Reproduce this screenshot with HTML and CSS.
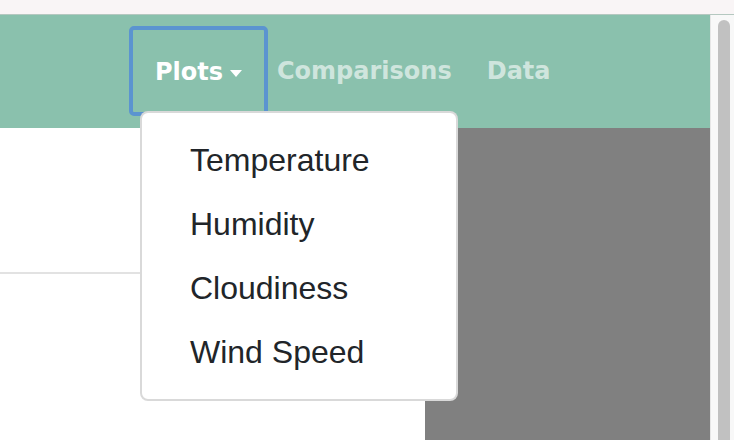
FILE: index.html
```html
<!DOCTYPE html>
<html>
<head>
<meta charset="utf-8">
<link rel="stylesheet" href="styles.css">
</head>
<body>
<div class="topstrip"></div>
<div class="window">
  <div class="page">
    <nav class="navbar">
      <div class="nav-item dropdown">
        <a class="nav-link active focus">Plots<span class="caret"></span></a>
        <div class="dropdown-menu">
          <a class="dropdown-item">Temperature</a>
          <a class="dropdown-item">Humidity</a>
          <a class="dropdown-item">Cloudiness</a>
          <a class="dropdown-item">Wind Speed</a>
        </div>
      </div>
      <a class="nav-link comp">Comparisons</a>
      <a class="nav-link data">Data</a>
    </nav>
    <div class="content">
      <div class="left"><div class="rule"></div></div>
      <div class="right"></div>
    </div>
  </div>
  <div class="scrollbar"><div class="thumb"></div></div>
</div>
</body>
</html>
```
FILE: styles.css
```css
html, body {
  margin: 0;
  padding: 0;
  width: 734px;
  height: 440px;
  overflow: hidden;
}
.topstrip {
  height: 14px;
  background: #f9f5f6;
  border-bottom: 1px solid #b5c8c0;
}
.window {
  display: flex;
  height: 425px;
  overflow: hidden;
}
.page {
  width: 710px;
  display: flex;
  flex-direction: column;
}
.navbar {
  height: 113px;
  background: #8ac1ad;
  display: flex;
  align-items: flex-start;
  padding-left: 129px;
  box-sizing: border-box;
  font-family: "DejaVu Sans", sans-serif;
  font-weight: 700;
  font-size: 24px;
}
.nav-item {
  position: relative;
}
.nav-link {
  display: flex;
  align-items: center;
  color: rgba(255,255,255,0.6);
  text-decoration: none;
  height: 90px;
  box-sizing: border-box;
  margin-top: 11px;
}
.nav-link.active {
  color: #fff;
}
.focus {
  border: 4px solid #5b94d0;
  border-radius: 5px;
  width: 139px;
  padding-left: 22px;
  padding-top: 2px;
}
.caret {
  display: inline-block;
  width: 0;
  height: 0;
  margin-left: 7px;
  border-top: 7px solid #fff;
  border-left: 6px solid transparent;
  border-right: 6px solid transparent;
  margin-top: 2px;
}
.comp {
  margin-left: 9px;
}
.data {
  margin-left: 35px;
}
.dropdown-menu {
  position: absolute;
  top: 96px;
  left: 11px;
  width: 318px;
  box-sizing: border-box;
  background: #fff;
  border: 2px solid rgba(0,0,0,0.15);
  border-radius: 8px;
  padding: 15px 0;
  z-index: 10;
  font-family: "Liberation Sans", Arial, sans-serif;
  font-weight: 400;
  font-size: 32px;
}
.dropdown-item {
  display: block;
  padding: 8px 48px;
  line-height: 48px;
  color: #212529;
}
.content {
  flex: 1;
  display: flex;
}
.left {
  width: 425px;
  background: #fff;
}
.rule {
  margin-top: 144px;
  height: 2px;
  background: #e2e2e2;
}
.right {
  flex: 1;
  background: #808080;
}
.scrollbar {
  width: 24px;
  background: #f8f8f8;
  border-left: 1px solid #e6e6e6;
  box-sizing: border-box;
  padding: 5px 4px 0 7px;
}
.thumb {
  height: 420px;
  background: #c1c1c1;
  border-radius: 7px 7px 0 0;
}
```
